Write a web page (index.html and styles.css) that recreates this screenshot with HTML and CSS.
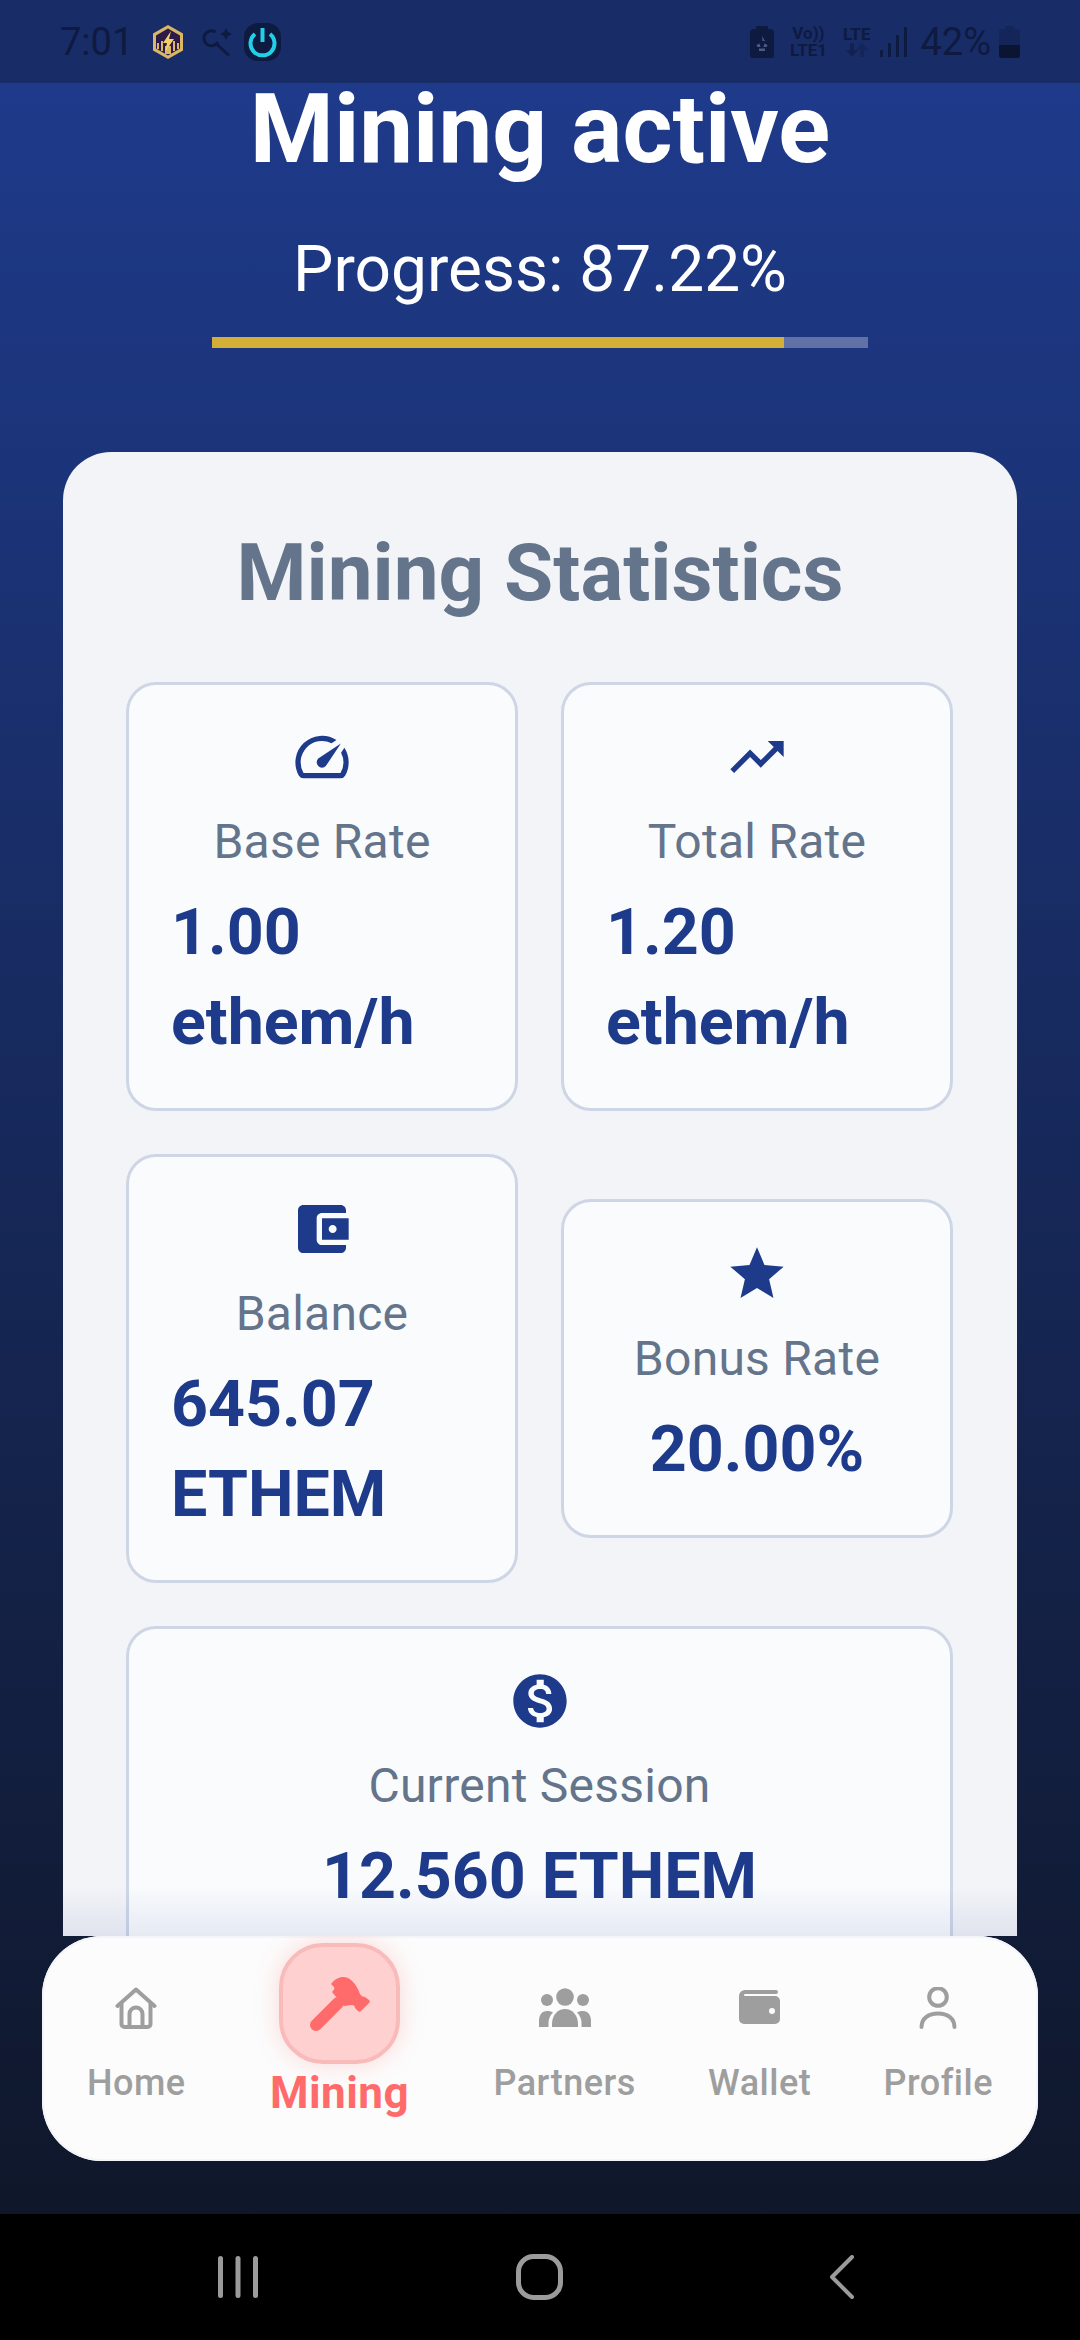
FILE: index.html
```html
<!DOCTYPE html>
<html>
  <head>
    <meta charset="utf-8">
    <link rel="stylesheet" href="styles.css">
  </head>
  <body>
    <div class="screen">
      <div class="status-bar">
        <div class="status-left">
          <span class="status-time">7:01</span>
          <svg class="badge-icon" width="32" height="36" viewBox="0 0 32 36">
            <polygon points="16,1 31,9.500 31,26.500 16,35 1,26.500 1,9.500" fill="#d9b765"/>
            <polygon points="16,4.500 28,11.500 28,24.500 16,31.500 4,24.500 4,11.500" fill="#2b1a4a"/>
            <path d="M5 19h2v6H5zM9 17h2v10H9zM21 17h2v10h-2zM25 19h2v6h-2zM13 22h6v8h-6z" fill="#d9b765"/>
            <polygon points="19,7 11,19 15,19 13,28 22,15 17,15" fill="#f3cf6b"/>
          </svg>
          <svg class="search-icon" width="32" height="30" viewBox="0 0 32 30">
            <path d="M13.500 5A7.500 7.500 0 1 0 16 15" fill="none" stroke="#0e1a3f" stroke-width="3"/>
            <path d="M14.500 17L27 28.500" stroke="#0e1a3f" stroke-width="3"/>
            <path d="M24 1l2 4 4 2-4 2-2 4-2-4-4-2 4-2z" fill="#0e1a3f"/>
          </svg>
          <svg class="power-icon" width="37" height="38" viewBox="0 0 37 38">
            <rect width="37" height="38" rx="14" fill="#0e1a3f"/>
            <path d="M11 11a12 12 0 1 0 15 0" fill="none" stroke="#22cfe6" stroke-width="4"/>
            <path d="M18.500 5v14" stroke="#22cfe6" stroke-width="4"/>
          </svg>
        </div>
        <div class="status-right">
          <svg width="24" height="32" viewBox="0 0 24 32">
            <path d="M6 0h12v3h2a4 4 0 0 1 4 4v22a3 3 0 0 1-3 3H3a3 3 0 0 1-3-3V7a4 4 0 0 1 4-4h2z" fill="#0e1a3f"/>
            <path d="M12 10l3 5h-2.500zM6.500 19l3-1.500 1 3.500h-3zM17.500 19l-3-1.500-1 3.500h3zM9 22.500h6V25H9z" fill="#4b5a88"/>
          </svg>
          <div class="net-block">
            <span>Vo))</span>
            <span>LTE1</span>
          </div>
          <div class="net-block">
            <span>LTE</span>
            <svg width="22" height="14" viewBox="0 0 22 14">
              <path d="M6 14L0 7h4V0h4v7h4z" fill="#0e1a3f" opacity="0.55"/>
              <path d="M16 0l6 7h-4v7h-4V7h-4z" fill="#0e1a3f" opacity="0.35"/>
            </svg>
          </div>
          <svg class="signal" width="28" height="30" viewBox="0 0 28 30">
            <rect x="0" y="23" width="3" height="7" fill="#0e1a3f"/>
            <rect x="8" y="16" width="3" height="14" fill="#0e1a3f"/>
            <rect x="16" y="8" width="3" height="22" fill="#0e1a3f"/>
            <rect x="24" y="0" width="3" height="30" fill="#0e1a3f"/>
          </svg>
          <span class="status-pct">42%</span>
          <svg width="21" height="32" viewBox="0 0 21 32">
            <path d="M6 0h9v3h3a3 3 0 0 1 3 3v23a3 3 0 0 1-3 3H3a3 3 0 0 1-3-3V6a3 3 0 0 1 3-3h3z" fill="#0e1a3f" opacity="0.35"/>
            <path d="M0 19h21v10a3 3 0 0 1-3 3H3a3 3 0 0 1-3-3z" fill="#0b1430"/>
          </svg>
        </div>
      </div>

      <div class="app">
        <div class="scroll-area">
          <h1 class="title">Mining active</h1>
          <p class="progress-text">Progress: 87.22%</p>
          <div class="progress-track">
            <div class="progress-fill" style="width:87.22%"></div>
          </div>

          <div class="stats-card">
            <h2 class="stats-title">Mining Statistics</h2>
            <div class="stats-grid">
              <div class="stat">
                <svg class="stat-icon" viewBox="0 0 24 24"><path d="M20.38 8.57l-1.23 1.85a8 8 0 0 1-.22 7.58H5.070A8 8 0 0 1 15.580 6.850l1.850-1.230A10 10 0 0 0 3.350 19a2 2 0 0 0 1.720 1h13.850a2 2 0 0 0 1.740-1 10 10 0 0 0-.27-10.440zm-9.790 6.840a2 2 0 0 0 2.830 0l5.660-8.490-8.490 5.660a2 2 0 0 0 0 2.830z"/></svg>
                <div class="stat-label">Base Rate</div>
                <div class="stat-value">1.00 ethem/h</div>
              </div>
              <div class="stat">
                <svg class="stat-icon" viewBox="0 0 24 24"><path d="M16 6l2.290 2.290-4.880 4.880-4-4L2 16.590 3.410 18l6-6 4 4 6.300-6.290L22 12V6z"/></svg>
                <div class="stat-label">Total Rate</div>
                <div class="stat-value">1.20 ethem/h</div>
              </div>
              <div class="stat">
                <svg class="stat-icon" viewBox="0 0 24 24"><path d="M21 18v1c0 1.100-.9 2-2 2H5c-1.110 0-2-.9-2-2V5c0-1.100.89-2 2-2h14c1.100 0 2 .9 2 2v1h-9c-1.110 0-2 .9-2 2v8c0 1.100.89 2 2 2h9zm-9-2h10V8H12v8zm4-2.500c-.83 0-1.500-.67-1.500-1.500s.67-1.500 1.500-1.500 1.500.67 1.500 1.500-.67 1.500-1.500 1.500z"/></svg>
                <div class="stat-label">Balance</div>
                <div class="stat-value">645.07 ETHEM</div>
              </div>
              <div class="stat">
                <svg class="stat-icon" viewBox="0 0 24 24"><path d="M12 17.270L18.180 21l-1.640-7.030L22 9.240l-7.190-.61L12 2 9.190 8.630 2 9.240l5.460 4.730L5.820 21z"/></svg>
                <div class="stat-label">Bonus Rate</div>
                <div class="stat-value">20.00%</div>
              </div>
              <div class="stat stat-wide">
                <svg class="stat-icon" viewBox="0 0 24 24"><path d="M12 2C6.480 2 2 6.480 2 12s4.480 10 10 10 10-4.480 10-10S17.520 2 12 2zm1.410 16.090V20h-2.670v-1.930c-1.710-.36-3.160-1.460-3.270-3.400h1.960c.1 1.050.82 1.870 2.650 1.870 1.960 0 2.400-.98 2.400-1.590 0-.83-.44-1.610-2.670-2.140-2.480-.6-4.180-1.620-4.180-3.670 0-1.720 1.390-2.840 3.110-3.210V4h2.670v1.950c1.860.45 2.790 1.860 2.850 3.390H14.300c-.05-1.110-.64-1.870-2.220-1.870-1.500 0-2.400.68-2.400 1.640 0 .84.65 1.390 2.670 1.910s4.180 1.390 4.180 3.910c-.01 1.830-1.380 2.830-3.120 3.160z"/></svg>
                <div class="stat-label">Current Session</div>
                <div class="stat-value">12.560 ETHEM</div>
              </div>
            </div>
            <div class="scroll-fade"></div>
          </div>
        </div>

        <nav class="bottom-nav">
          <div class="nav-item">
            <svg width="42" height="42" viewBox="0 0 42 42" class="nav-stroke">
              <path d="M2.500 19L21 2.500 39.500 19"/>
              <path d="M6.500 16v21a3 3 0 0 0 3 3h23a3 3 0 0 0 3-3V16"/>
              <path d="M14.500 40V27a6.500 6.500 0 0 1 13 0v13"/>
            </svg>
            <span class="nav-label">Home</span>
          </div>
          <div class="nav-item nav-active">
            <div class="nav-bubble">
              <svg width="60" height="54" viewBox="0 0 60 54" fill="#ff6b6b">
                <path d="M21 7C25 2 29 0 33 0C40 0 46 6 50 17C51 19 53 20 55 20L59 23C60 24 60 25 59 26L51 34C50 35 49 35 48 34L45 31C45 29 44 28 42 28C39 28 37 29 34 29L22 15C24 13 25 11 24 10Z"/>
                <path d="M6 48L28 26" stroke="#ff6b6b" stroke-width="12" stroke-linecap="round"/>
              </svg>
            </div>
            <span class="nav-label">Mining</span>
          </div>
          <div class="nav-item">
            <svg width="52" height="42" viewBox="0 -1 52 42" fill="#9e9e9e">
              <circle cx="26" cy="9" r="8.800"/>
              <circle cx="44" cy="12" r="6"/>
              <circle cx="8" cy="12" r="6"/>
              <path d="M13 39v-3c0-9 6-15 13-15s13 6 13 15v3z"/>
              <path d="M42.500 39v-4c0-4-1.500-7.500-4.500-10.500 2-1.200 4-1.500 6-1.500 5 0 8 4 8 10v6z"/>
              <path d="M9.500 39v-4c0-4 1.500-7.500 4.500-10.500-2-1.200-4-1.500-6-1.500-5 0-8 4-8 10v6z"/>
            </svg>
            <span class="nav-label">Partners</span>
          </div>
          <div class="nav-item">
            <svg width="41" height="42" viewBox="0 -3 41 42">
              <path d="M6 0H37a2 2 0 0 1 0 4H6a1 1 0 0 0 0 2H36a5 5 0 0 1 5 5V29a5 5 0 0 1-5 5H5a5 5 0 0 1-5-5V6a6 6 0 0 1 6-6z" fill="#9e9e9e"/>
              <circle cx="33" cy="21" r="3" fill="#fcfcfc"/>
            </svg>
            <span class="nav-label">Wallet</span>
          </div>
          <div class="nav-item">
            <svg width="38" height="42" viewBox="0 0 38 42" class="nav-stroke">
              <circle cx="19" cy="10" r="8.800"/>
              <path d="M2.500 40C2.500 31 10 26.500 19 26.500S35.500 31 35.500 40"/>
            </svg>
            <span class="nav-label">Profile</span>
          </div>
        </nav>
      </div>

      <div class="system-nav">
        <svg width="40" height="44" viewBox="0 0 40 44" fill="#9b9b9b">
          <rect x="0" y="1" width="5" height="42" rx="2.500"/>
          <rect x="17.500" y="1" width="5" height="42" rx="2.500"/>
          <rect x="35" y="1" width="5" height="42" rx="2.500"/>
        </svg>
        <svg width="47" height="46" viewBox="0 0 47 46">
          <rect x="2.500" y="2.500" width="42" height="41" rx="15" fill="none" stroke="#9b9b9b" stroke-width="5"/>
        </svg>
        <svg class="back-icon" width="24" height="44" viewBox="0 0 24 44">
          <path d="M22 2L2 22l20 20" fill="none" stroke="#9b9b9b" stroke-width="4" stroke-linecap="round" stroke-linejoin="round"/>
        </svg>
      </div>
    </div>
  </body>
</html>
```

FILE: styles.css
```css
* {
  box-sizing: border-box;
}

html, body {
  margin: 0;
  padding: 0;
}

body {
  width: 1080px;
  height: 2340px;
  overflow: hidden;
  background-color: #000;
  font-family: Roboto, "Liberation Sans", sans-serif;
}

.screen {
  display: flex;
  flex-direction: column;
  height: 2340px;
}

/* status bar */

.status-bar {
  height: 83px;
  flex-shrink: 0;
  display: flex;
  justify-content: space-between;
  align-items: center;
  padding: 0 60px;
  background-color: #182c67;
  color: #0e1a3f;
}

.status-left,
.status-right {
  display: flex;
  align-items: center;
}

.status-time,
.status-pct {
  font-size: 38px;
  line-height: 40px;
}

.status-time {
  margin-right: 19px;
}

.badge-icon {
  margin-right: 18px;
}

.search-icon {
  margin-right: 10px;
}

.status-right {
  gap: 8px;
}

.net-block {
  display: flex;
  flex-direction: column;
  align-items: center;
  margin-left: 8px;
  font-size: 17px;
  line-height: 17px;
  font-weight: 700;
}

.signal {
  margin-left: 2px;
}

.status-pct {
  margin-left: 4px;
}

/* main */

.app {
  flex: 1;
  display: flex;
  flex-direction: column;
  background: linear-gradient(180deg, #1e3a8a 0%, #0f172a 100%);
}

.scroll-area {
  height: 1853px;
  flex-shrink: 0;
}

.title {
  margin: 0;
  text-align: center;
  color: #fff;
  font-size: 96px;
  line-height: 92px;
  font-weight: 700;
}

.progress-text {
  margin: 58px 0 0;
  text-align: center;
  color: #fff;
  font-size: 64px;
  line-height: 74px;
}

.progress-track {
  width: 656px;
  height: 11px;
  margin: 30px auto 0;
  background-color: rgba(255, 255, 255, 0.3);
}

.progress-fill {
  height: 100%;
  background-color: #d4af37;
}

.stats-card {
  position: relative;
  height: 1484px;
  overflow: hidden;
  margin: 104px 63px 0;
  padding: 74px 63px 0;
  border-radius: 48px 48px 0 0;
  background-color: #f3f4f8;
}

.stats-title {
  margin: 0 0 62px;
  text-align: center;
  color: #64748b;
  font-size: 80px;
  line-height: 94px;
  font-weight: 700;
}

.stats-grid {
  display: grid;
  grid-template-columns: 392px 392px;
  gap: 43px 43px;
  align-items: center;
}

.stat {
  display: flex;
  flex-direction: column;
  align-items: center;
  padding: 40px 42px 41px;
  border: 3px solid #ced6e6;
  border-radius: 30px;
  background-color: #f9fbfd;
}

.stat-wide {
  grid-column: 1 / 3;
}

.stat-icon {
  width: 64px;
  height: 64px;
  fill: #1e3a8a;
}

.stat-label {
  margin-top: 25px;
  color: #64748b;
  font-size: 48px;
  line-height: 56px;
  letter-spacing: 0.25px;
}

.stat-value {
  margin-top: 17px;
  color: #1e3a8a;
  font-size: 64.500px;
  line-height: 90px;
  font-weight: 700;
}

.scroll-fade {
  position: absolute;
  left: 0;
  right: 0;
  bottom: 0;
  height: 50px;
  background: linear-gradient(180deg, rgba(30, 58, 138, 0), rgba(30, 58, 138, 0.09));
}

/* bottom nav */

.bottom-nav {
  height: 225px;
  margin: 0 42px;
  padding: 51px 45px 0;
  display: flex;
  justify-content: space-between;
  align-items: flex-start;
  border-radius: 60px;
  background-color: #fcfcfc;
  box-shadow: inset 0 0 0 2px #f4f5fa;
}

.nav-item {
  display: flex;
  flex-direction: column;
  align-items: center;
  color: #9e9e9e;
}

.nav-stroke {
  fill: none;
  stroke: #9e9e9e;
  stroke-width: 4;
  stroke-linecap: round;
  stroke-linejoin: round;
}

.nav-label {
  margin-top: 33px;
  font-size: 36px;
  line-height: 42px;
  font-weight: 500;
  letter-spacing: 0.5px;
}

.nav-active {
  margin: -44px 12px 0;
  color: #ff6b6b;
}

.nav-active .nav-label {
  margin-top: 3px;
  font-size: 44px;
  line-height: 52px;
  font-weight: 700;
}

.nav-bubble {
  width: 121px;
  height: 121px;
  display: flex;
  align-items: center;
  justify-content: center;
  border: 4px solid #f9baba;
  border-radius: 44px;
  background-color: #ffd0d0;
  box-shadow: 0 0 24px rgba(255, 107, 107, 0.25);
}

/* android nav */

.system-nav {
  height: 126px;
  flex-shrink: 0;
  display: flex;
  align-items: center;
  padding-left: 218px;
  gap: 258px;
  background-color: #000;
}

.back-icon {
  margin-left: 9px;
}
```
